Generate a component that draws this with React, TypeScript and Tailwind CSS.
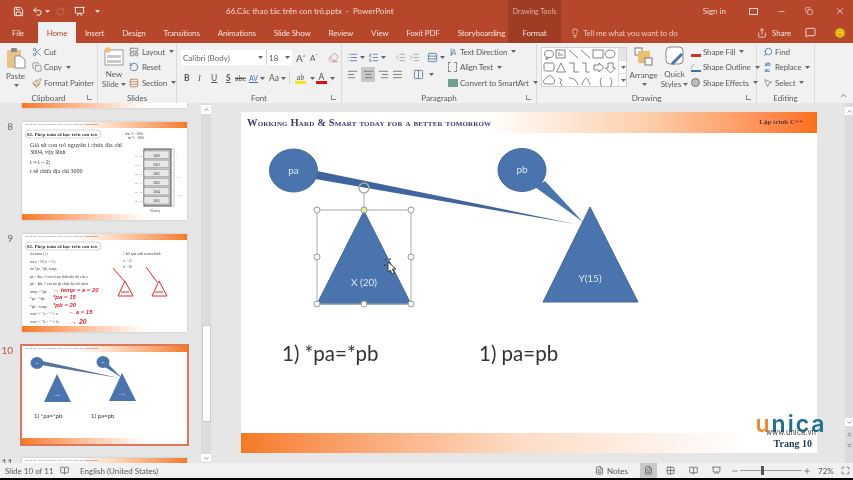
import React from "react";
import {
  Save, Undo2, Scissors, Copy, Paintbrush, LayoutTemplate, RotateCcw, Rows3, RotateCw,
  List, ListOrdered, IndentDecrease, IndentIncrease, AlignLeft, AlignCenter, AlignRight, AlignJustify,
  Columns2, Search, MousePointer2, Lightbulb, Share, MessageSquare, Smile, X, Minus, ChevronUp, ChevronDown,
  Eraser, Plus, FileText, Grid2x2, BookOpen, Presentation, Maximize, ChevronsUp, ChevronsDown, Copy as CopyIcon,
} from "lucide-react";

const sans = "font-['Lato','Liberation_Sans',sans-serif]";

function Caret({ light }: { light?: boolean }) {
  return (
    <svg width="5" height="3" viewBox="0 0 5 3" className="shrink-0 ml-[2px]">
      <path d="M0 0h5L2.500 3z" fill={light ? "#f3d6ce" : "#666"} />
    </svg>
  );
}

function Group({ label, width, launcher, children }: { label: string; width: string; launcher?: boolean; children: React.ReactNode }) {
  return (
    <div className={`${width} shrink-0 h-full flex flex-col border-r border-[#dadada] relative`}>
      <div className="h-[48px] flex">{children}</div>
      <div className="h-[11px] flex items-center justify-center text-[8px] text-[#5a5a5a]">{label}</div>
      {launcher && <div className="absolute right-[5px] bottom-[3px] w-[5px] h-[5px] border-l border-b border-[#888]" />}
    </div>
  );
}

function SmallCmd({ icon, label, caret }: { icon: React.ReactNode; label: string; caret?: boolean }) {
  return (
    <div className="h-[15.5px] flex items-center gap-[2px] text-[8px] tracking-[-0.15px] text-[#5a5a5a] whitespace-nowrap">
      <span className="w-[11px] h-[11px] flex items-center justify-center shrink-0">{icon}</span>
      <span>{label}</span>
      {caret && <Caret />}
    </div>
  );
}

function Shapes() {
  const s = { fill: "none", stroke: "#666", strokeWidth: 0.8 };
  return (
    <svg viewBox="0 0 76 40" className="w-[76px] h-[40px] shrink-0">
      <ellipse cx="7" cy="6" rx="4.500" ry="3.500" {...s} /><path d="M5 9l-1 3 3-3" {...s} />
      <rect x="14" y="2" width="9" height="8" {...s} /><path d="M16 5h2M16 7h5" {...s} />
      <path d="M27 2l9 8M39 2l9 8" {...s} />
      <rect x="51" y="2" width="10" height="8" {...s} />
      <ellipse cx="68" cy="6" rx="5" ry="4" {...s} />
      <rect x="2" y="15" width="10" height="8" rx="1.500" {...s} />
      <path d="M19 15l-4.500 9h9zM27 15h5v9h5M40 15h4v9h4M52 17h5v-2l5 4.500-5 4.500v-2h-5zM66 15h5v5h2.500l-5 5-5-5H66z" {...s} />
      <path d="M3 36c-3-2-1-5 1-6 2-3 6-3 7 0 2 1 2 5 0 6zM17 30l3 2-2 2 2 4M27 30c5 0 8 3 9 7M40 37c3-10 6-8 8 0M60 30c-2 0-1 3-2 4 1 1 0 4 2 4M68 30c2 0 1 3 2 4-1 1 0 4-2 4" {...s} />
    </svg>
  );
}

function PasteIcon() {
  return (
    <svg width="20" height="22" viewBox="0 0 20 22">
      <rect x="1" y="3" width="14" height="18" rx="1" fill="#e8c48a" />
      <rect x="5" y="1" width="6" height="4" rx="1" fill="#8a8a8a" />
      <path d="M9 9h6l4 4v8H9z" fill="#fff" stroke="#777" strokeWidth=".8" />
    </svg>
  );
}

function NewSlideIcon() {
  return (
    <svg width="20" height="19" viewBox="0 0 20 19">
      <rect x="1" y="3" width="18" height="15" fill="#fff" stroke="#999" />
      <rect x="3" y="8" width="14" height="3" fill="#c9c9c9" />
      <rect x="3" y="13" width="14" height="3" fill="#c9c9c9" />
      <circle cx="4" cy="3" r="2.800" fill="#f3c26b" />
    </svg>
  );
}

function Ribbon() {
  return (
    <div className={`h-[60px] bg-[#f1f1f1] flex shrink-0 pt-[1px] ${sans}`}>
      <Group label="Clipboard" width="w-[98px]" launcher>
        <div className="w-[31px] flex flex-col items-center pt-[3px] text-[8px] text-[#5a5a5a] leading-[10px]">
          <PasteIcon />
          <span className="mt-[2px]">Paste</span>
          <span className="mt-[3px]"><Caret /></span>
        </div>
        <div className="flex flex-col">
          <SmallCmd icon={<Scissors size={10} className="text-[#5b7fa6]" />} label="Cut" />
          <SmallCmd icon={<Copy size={10} className="text-[#888]" />} label="Copy" caret />
          <SmallCmd icon={<Paintbrush size={10} className="text-[#a67c3a]" />} label="Format Painter" />
        </div>
      </Group>
      <Group label="Slides" width="w-[79px]">
        <div className="w-[31px] pl-[1px] flex flex-col items-center pt-[3px] text-[8px] text-[#5a5a5a] leading-[10px]">
          <NewSlideIcon />
          <span className="mt-[3px]">New</span>
          <span className="flex items-center">Slide<Caret /></span>
        </div>
        <div className="flex flex-col">
          <SmallCmd icon={<LayoutTemplate size={10} className="text-[#777]" />} label="Layout" caret />
          <SmallCmd icon={<RotateCcw size={10} className="text-[#3f73a8]" />} label="Reset" />
          <SmallCmd icon={<Rows3 size={10} className="text-[#b9824f]" />} label="Section" caret />
        </div>
      </Group>
      <Group label="Font" width="w-[165px]" launcher>
        <div className="flex flex-col pl-[4px] pt-[6px] text-[#5a5a5a]">
          <div className="flex items-center text-[8px]">
            <div className="w-[111px] h-[15px] bg-white flex items-center">
              <span className="w-[75px] pl-[2px] text-[#666] whitespace-nowrap">Calibri (Body)</span>
              <Caret />
              <span className="h-full w-[1px] bg-[#d0d0d0] ml-[3px]" />
              <span className="flex-1 pl-[2px] flex items-center">18<span className="ml-auto pr-[2px]"><Caret /></span></span>
            </div>
            <span className="text-[10px] leading-none ml-[4px] w-[14px]">A<sup className="text-[5px]">^</sup></span>
            <span className="text-[8px] leading-none w-[14px]">A<sup className="text-[5px]">ˇ</sup></span>
            <Eraser size={11} className="text-[#c98b9b] ml-[4px]" />
          </div>
          <div className="flex items-center mt-[7px] text-[8.5px] pl-[3px] h-[13px]">
            <span className="font-bold w-[14px]">B</span>
            <span className="italic w-[13px] font-['Liberation_Serif',serif]">I</span>
            <span className="underline w-[15px]">U</span>
            <span className="underline font-bold w-[9px]">S</span>
            <span className="line-through text-[7px] w-[14px]">abc</span>
            <span className="text-[7px] flex items-center text-[#4b6fa5] underline w-[20px]">AV<Caret /></span>
            <span className="flex items-center w-[20px]">Aa<Caret /></span>
            <span className="w-[1px] h-[11px] bg-[#d4d4d4] mr-[5px]" />
            <span className="flex flex-col items-center leading-[8px] text-[7px] w-[11px] italic">ab<span className="w-[11px] h-[3px] bg-[#f5e71b]" /></span>
            <span className="w-[10px] flex justify-center"><Caret /></span>
            <span className="flex flex-col items-center leading-[8px] text-[#444] w-[11px]">A<span className="w-[11px] h-[3px] bg-[#e01010]" /></span>
            <span className="w-[8px] flex justify-center"><Caret /></span>
          </div>
        </div>
      </Group>
      <Group label="Paragraph" width="w-[195px]" launcher>
        <div className="w-[105px] shrink-0 flex flex-col pl-[5px] pt-[6px] text-[#5f7ea6]">
          <div className="flex items-center h-[14px]">
            <List size={11} /><Caret /><span className="w-[3px]" /><ListOrdered size={11} /><Caret />
            <IndentDecrease size={11} className="ml-[9px] text-[#aaa]" /><IndentIncrease size={11} className="ml-[3px] text-[#aaa]" />
            <Rows3 size={11} className="ml-[7px]" /><Caret />
          </div>
          <div className="flex items-center gap-[3px] mt-[3px] text-[#777]">
            <AlignLeft size={11} />
            <span className="w-[14px] h-[15px] bg-[#c8c8c8] flex items-center justify-center"><AlignCenter size={11} /></span>
            <AlignRight size={11} /><AlignJustify size={11} />
            <Columns2 size={11} className="ml-[7px] text-[#5f7ea6]" /><Caret />
          </div>
        </div>
        <div className="flex flex-col">
          <SmallCmd icon={<span className="text-[7px] text-[#5f7ea6] tracking-[-1px]">||A</span>} label="Text Direction" caret />
          <SmallCmd icon={<span className="w-[9px] h-[10px] border border-dashed border-[#888]" />} label="Align Text" caret />
          <SmallCmd icon={<span className="w-[10px] h-[8px] bg-[#6fa08b]" />} label="Convert to SmartArt" caret />
        </div>
      </Group>
      <Group label="Drawing" width="w-[220px]" launcher>
        <div className="ml-[4px] mt-[3px] w-[86px] h-[40px] bg-white border border-[#d0d0d0] flex shrink-0">
          <Shapes />
          <div className="flex-1 border-l border-[#ddd] flex flex-col">
            <div className="flex-1 bg-[#e4e4e4]" />
            <div className="flex-1 border-y border-[#ddd] flex items-center justify-center"><Caret /></div>
            <div className="flex-1 flex items-center justify-center"><Caret /></div>
          </div>
        </div>
        <div className="w-[33px] flex flex-col items-center pt-[3px] text-[8px] text-[#5a5a5a] leading-[10px] shrink-0">
          <svg width="20" height="20" viewBox="0 0 20 20">
            <rect x="1" y="1" width="7" height="7" fill="#fff" stroke="#777" />
            <rect x="4" y="4" width="12" height="12" fill="#e8c070" />
            <rect x="11" y="11" width="7" height="7" fill="#fff" stroke="#777" />
          </svg>
          <span className="mt-[3px]">Arrange</span>
          <span className="mt-[3px]"><Caret /></span>
        </div>
        <div className="w-[29px] flex flex-col items-center pt-[2px] text-[8px] text-[#5a5a5a] leading-[10px] shrink-0">
          <svg width="20" height="20" viewBox="0 0 20 20">
            <rect x="1" y="1" width="17" height="17" rx="4" fill="#fff" stroke="#888" />
            <path d="M7 18L17 8" stroke="#4a74ad" strokeWidth="3" />
          </svg>
          <span className="mt-[3px]">Quick</span>
          <span className="flex items-center">Styles<Caret /></span>
        </div>
        <div className="flex flex-col ml-[1px]">
          <SmallCmd icon={<span className="w-[10px] h-[3px] mt-[7px] bg-[#c0392b]" />} label="Shape Fill" caret />
          <SmallCmd icon={<span className="w-[10px] h-[10px] border-b-2 border-[#3f73a8] text-[#3f73a8] text-[7px] leading-[8px]">∕</span>} label="Shape Outline" caret />
          <SmallCmd icon={<span className="w-[9px] h-[9px] rounded-full bg-[#bbb] border border-[#777]" />} label="Shape Effects" caret />
        </div>
      </Group>
      <Group label="Editing" width="w-[58px]">
        <div className="flex flex-col pl-[5px]">
          <SmallCmd icon={<Search size={10} className="text-[#3f73a8] -scale-x-100" />} label="Find" />
          <SmallCmd icon={<span className="text-[6px] leading-[6px] text-[#3f73a8] font-bold">ab<br />ac</span>} label="Replace" caret />
          <SmallCmd icon={<MousePointer2 size={10} className="text-[#888]" />} label="Select" caret />
        </div>
      </Group>
      <div className="flex-1 flex items-end justify-end pr-[5px] pb-[3px]">
        <ChevronUp size={9} className="text-[#666]" />
      </div>
    </div>
  );
}

function TitleBar() {
  return (
    <div className={`h-[22px] bg-[#b7472a] flex items-center shrink-0 text-[#f3d6ce] text-[8px] ${sans}`}>
      <div className="w-[113px] flex items-center pl-[13px] text-white shrink-0">
        <Save size={11} />
        <Undo2 size={11} className="ml-[8px]" /><Caret light />
        <RotateCw size={9} className="ml-[6px] text-[#c9765f]" />
        <Presentation size={11} className="ml-[9px]" />
        <span className="ml-[8px]"><Caret light /></span>
      </div>
      <div className="w-[157px] ml-[113px] text-center whitespace-pre shrink-0">66.Các thao tác trên con trỏ.pptx  -  PowerPoint</div>
      <div className="w-[53px] ml-[125px] h-full bg-[#9f3d24] flex items-center justify-center text-[7px] text-[#dfb3a6] shrink-0">Drawing Tools</div>
      <div className="ml-auto flex items-center h-full">
        <span className="mr-[23px]">Sign in</span>
        <span className="w-[9px] h-[7px] border border-[#f3d6ce] mr-[19px]" />
        <Minus size={9} className="mr-[19px]" />
        <CopyIcon size={8} className="mr-[22px]" />
        <X size={10} className="mr-[8px]" />
      </div>
    </div>
  );
}

function TabBar() {
  return (
    <div className={`h-[21px] bg-[#b7472a] flex items-center shrink-0 text-[#f6e0da] text-[8px] tracking-[-0.15px] ${sans}`}>
      <div className="w-[38px] pl-[12px]">File</div>
      <div className="w-[38px] h-full bg-[#f1f1f1] text-[#b7472a] flex items-center justify-center">Home</div>
      <div className="flex items-center h-full pl-[9px] gap-[18px] whitespace-nowrap w-[432px] shrink-0">
        <span>Insert</span><span>Design</span><span>Transitions</span><span>Animations</span><span>Slide Show</span><span>Review</span><span>View</span><span>Foxit PDF</span><span>Storyboarding</span>
      </div>
      <div className="w-[53px] h-full bg-[#9f3d24] flex items-center justify-center shrink-0">Format</div>
      <div className="flex items-center ml-[9px] gap-[3px] whitespace-nowrap text-[#eec9be]">
        <Lightbulb size={10} /> Tell me what you want to do
      </div>
      <div className="ml-auto flex items-center pr-[7px]">
        <Share size={10} />
        <span className="ml-[5px] mr-[14px]">Share</span>
        <MessageSquare size={11} className="mr-[18px]" />
        <Smile size={12} fill="#f5c518" className="text-[#a8741a]" />
      </div>
    </div>
  );
}

function ThumbFrame({ children }: { children?: React.ReactNode }) {
  return (
    <div className="w-[165px] h-[98px] bg-white shadow-[0_0_2px_#bbb] flex flex-col">
      <div className="h-[6px] bg-gradient-to-r from-white from-[30%] via-[#fde2cd] to-[#f47a20] shrink-0 pl-[3px] text-[2.500px] text-[#445] leading-[6px] whitespace-nowrap font-['Liberation_Serif',serif]">
        WORKING HARD &amp; SMART TODAY FOR A BETTER TOMORROW
      </div>
      <div className="flex-1 min-h-0 relative">{children}</div>
      <div className="h-[6px] bg-gradient-to-r from-[#f47a20] to-white to-[75%] shrink-0" />
    </div>
  );
}

function Thumb({ n, selected, children }: { n: number; selected?: boolean; children?: React.ReactNode }) {
  return (
    <div className="flex items-start h-[98px]">
      <div className={`w-[13px] text-right text-[10px] leading-[8px] ${selected ? "text-[#c0533a]" : "text-[#666]"} ${sans}`}>{n}</div>
      <div className={`ml-[9px] ${selected ? "outline-[2px] outline-solid outline-[#e0765c]" : ""}`}>
        <ThumbFrame>{children}</ThumbFrame>
      </div>
    </div>
  );
}

function Thumb8() {
  const rows = ["3000", "3001", "3002", "3003", "3004", "3005"];
  return (
    <svg viewBox="0 0 165 86" className="w-full h-full font-['Liberation_Serif',serif]">
      <rect x="3" y="2" width="76" height="8" rx="4" fill="#fff" stroke="#aaa" strokeWidth=".5" />
      <text x="5" y="8" fontSize="5" fontWeight="700" fill="#333">02. Phép toán số học trên con trỏ</text>
      <text x="8" y="19" fontSize="6" fill="#333" textLength="92">Giả sử con trỏ nguyên i chứa địa chỉ</text>
      <text x="8" y="26" fontSize="6" fill="#333">3004, vậy lệnh</text>
      <text x="8" y="36" fontSize="6" fill="#333">i = i – 2;</text>
      <text x="8" y="45" fontSize="6" fill="#333">i sẽ chứa địa chỉ 3000</text>
      <text x="103" y="7" fontSize="3" fill="#444">char *i = 3000;</text>
      <text x="106" y="11" fontSize="3" fill="#444">int *i = 3000;</text>
      <rect x="122" y="21" width="27" height="57" fill="#c4c4c4" stroke="#555" />
      <path d="M149 21h3v57h-3" fill="none" stroke="#888" strokeWidth=".5" />
      {rows.map((r, i) => (
        <g key={r}>
          <rect x="122" y={23 + i * 9.100} width="25" height="7.500" fill="#e8e8e8" stroke="#777" strokeWidth=".4" />
          <text x="131" y={28.500 + i * 9.100} fontSize="3.500" fill="#444">{r}</text>
          <text x="113" y={28.500 + i * 9.100} fontSize="2.800" fill="#666">ch + {i}</text>
        </g>
      ))}
      <text x="154" y="29" fontSize="2.800" fill="#666">i</text>
      <text x="154" y="50" fontSize="2.800" fill="#666">i + 1</text>
      <text x="154" y="68" fontSize="2.800" fill="#666">i + 2</text>
      <text x="128" y="84" fontSize="3" fill="#666">Memory</text>
    </svg>
  );
}

function Thumb9() {
  const lines = ["int main ( ) {", "int a = 20, b = 15;", "int *pa, *pb, temp;", "pa = &a; // con trỏ pa chứa địa chỉ của a", "pb = &b; // con trỏ pb chứa địa chỉ của b", "temp = *pa;", "*pa = *pb;", "*pb = temp;", "cout << \"a = \" << a", "cout << \"b = \" << b;"];
  return (
    <svg viewBox="0 0 165 86" className="w-full h-full font-['Liberation_Serif',serif]">
      <rect x="3" y="2" width="76" height="8" rx="4" fill="#fff" stroke="#aaa" strokeWidth=".5" />
      <text x="5" y="8" fontSize="5" fontWeight="700" fill="#333">02. Phép toán số học trên con trỏ</text>
      {lines.map((l, i) => <text key={i} x="8" y={15 + i * 7.550} fontSize="3.600" fill="#444">{l}</text>)}
      <text x="101" y="15" fontSize="3.500" fill="#444">// kết quả xuất ra màn hình</text>
      <text x="101" y="22" fontSize="3.500" fill="#444">a = 15</text>
      <text x="101" y="28" fontSize="3.500" fill="#444">b = 20</text>
      <g fill="none" stroke="#e3262e" strokeWidth="1">
        <path d="M103 41l-7 15h15zM137 41l-7 15h15zM91 28l12 14M124 27l11 15" />
        <path d="M99 52h8M133 52h8" />
      </g>
      <g fill="#e3262e" fontSize="6" fontWeight="700" fontFamily="Liberation Sans" fontStyle="italic">
        <text x="31" y="52">→ temp = a = 20</text>
        <text x="31" y="59">*pa = 15</text>
        <text x="31" y="67">*pb = 20</text>
        <text x="46" y="74">→ a = 15</text>
        <text x="48" y="84" fontSize="7">→ 20</text>
      </g>
    </svg>
  );
}

function Thumb10() {
  return (
    <svg viewBox="0 0 165 86" className="w-full h-full font-['Lato','Liberation_Sans',sans-serif]">
      <path d="M20 9l-1 4 78 13z" fill="#5a7299" />
      <path d="M86 12l-3 3 17 11z" fill="#4a74ad" />
      <ellipse cx="15" cy="11" rx="6.500" ry="6" fill="#4a74ad" />
      <ellipse cx="81" cy="10" rx="6.500" ry="6" fill="#4a74ad" />
      <path d="M35 22L22 50h27z" fill="#4a74ad" />
      <path d="M100 21L87 49h27z" fill="#4a74ad" />
      <g fill="#dce6f2" fontSize="2.500" textAnchor="middle">
        <text x="15" y="12">pa</text><text x="81" y="11">pb</text><text x="35" y="44">X (20)</text><text x="100" y="43">Y(15)</text>
      </g>
      <text x="12" y="66" fontSize="6" fill="#333">1) *pa=*pb</text>
      <text x="69" y="66" fontSize="6" fill="#333">1) pa=pb</text>
    </svg>
  );
}

function ThumbPane() {
  return (
    <div className="w-[212px] h-full shrink-0 flex overflow-hidden">
      <div className="w-[201px] shrink-0 flex flex-col gap-[14px] -mt-[93px]">
        <div className="ml-[22px] w-[165px] h-[98px] bg-white flex flex-col justify-end shrink-0 shadow-[0_0_2px_#bbb]"><div className="h-[6px] bg-gradient-to-r from-[#f47a20] to-white to-[75%]" /></div>
        <Thumb n={8}><Thumb8 /></Thumb>
        <Thumb n={9}><Thumb9 /></Thumb>
        <Thumb n={10} selected><Thumb10 /></Thumb>
        <Thumb n={11} />
      </div>
      <div className="w-[10px] h-full bg-[#dcdcdc] flex flex-col items-center pt-[2px]">
        <div className="w-[10px] h-[9px] bg-white flex items-center justify-center"><ChevronUp size={7} className="text-[#444]" /></div>
        <div className="mt-[211px] w-[9px] h-[97px] bg-white border border-[#ccc]" />
        <div className="mt-auto mb-[1px] w-[10px] h-[8px] bg-white flex items-center justify-center"><ChevronDown size={7} className="text-[#444]" /></div>
      </div>
    </div>
  );
}

function MainSlide() {
  const blue = "#4a74ad";
  const handles = [[317, 210], [364, 210], [411, 210], [317, 257], [411, 257], [317, 304], [364, 304], [411, 304]];
  return (
    <div className="w-[576px] h-[341px] bg-white flex flex-col shrink-0 relative">
      <div className="h-[21px] bg-gradient-to-r from-white from-[42%] via-[#fcd0ac] via-[70%] to-[#fb6f16] flex items-center justify-between pl-[6px] pr-[14px] shrink-0 font-['Liberation_Serif',serif] font-bold text-[#3a3a70]">
        <span className="text-[10.5px] tracking-[0.15px] [font-variant:small-caps] whitespace-nowrap">Working Hard &amp; Smart today for a better tomorrow</span>
        <span className="text-[7px] text-[#5a3a3a]">Lập trình C++</span>
      </div>
      <div className="flex-1 relative">
        <svg viewBox="241 133 576 300" className="absolute inset-0 w-full h-full font-['Lato','Liberation_Sans',sans-serif]">
          <path d="M317 171L315 179 575 224z" fill="#3f659c" />
          <ellipse cx="293.500" cy="170.500" rx="24" ry="21.500" fill={blue} stroke="#44699c" />
          <path d="M545 181L535 187 583 222z" fill={blue} />
          <ellipse cx="522" cy="170" rx="24" ry="21.500" fill={blue} stroke="#44699c" />
          <path d="M590 207L543 302H638z" fill={blue} stroke="#44699c" />
          <path d="M364 211L317 304H411z" fill={blue} stroke="#44699c" />
          <path d="M364 193V210" stroke="#aaa" />
          <circle cx="364" cy="188" r="5" fill="none" stroke="#aaa" strokeWidth="1.500" />
          <rect x="317" y="210" width="94" height="94" fill="none" stroke="#aaa" />
          {handles.map(([x, y], i) => (
            <circle key={i} cx={x} cy={y} r="3" fill={i === 1 ? "#e8eb9c" : "#fff"} stroke="#999" />
          ))}
          <path d="M388 262l0 10 2.500-2 1.500 4 2-1-1.500-4h3.500z" fill="#fff" stroke="#222" strokeWidth=".8" />
          <path d="M390 260v-2M386 265h-2M386 260l-1-1" stroke="#222" />
          <g fill="#dce6f2" fontSize="10" textAnchor="middle">
            <text x="293.500" y="174">pa</text>
            <text x="522" y="173">pb</text>
            <text x="364" y="286">X (20)</text>
            <text x="590" y="282">Y(15)</text>
          </g>
          <g fill="#333" fontSize="20.500">
            <text x="282" y="361">1) *pa=*pb</text>
            <text x="479" y="361">1) pa=pb</text>
          </g>
        </svg>
      </div>
      <div className="h-[20px] bg-gradient-to-r from-[#f47a20] via-[#fcdcc4] via-[48%] to-white to-[88%] shrink-0 flex justify-end items-center pr-[5px]">
        <span className="font-['Liberation_Serif',serif] font-bold text-[10px] text-[#1f3a5f]">Trang 10</span>
      </div>
      <div className="absolute right-[-8px] top-[301px] w-[68px] flex flex-col items-center font-['Inter','Liberation_Sans',sans-serif]">
        <div className="text-[23px] leading-[22px] font-semibold tracking-[2px] text-[#1f6f8f] whitespace-nowrap"><span className="text-[#ef8a2c]">u</span>nica</div>
        <div className="text-[7.5px] leading-[7px] text-[#444] -mt-[6px]">www.unica.vn</div>
      </div>
    </div>
  );
}

function VScroll() {
  return (
    <div className="w-[8px] h-full ml-auto bg-[#dcdcdc] flex flex-col text-[#555] shrink-0 pt-[4px] pb-[12px]">
      <div className="h-[8px] bg-white flex items-center justify-center"><ChevronUp size={7} /></div>
      <div className="mt-auto h-[8px] bg-white flex items-center justify-center"><ChevronDown size={7} /></div>
      <div className="mt-[3px] h-[11px] flex items-center justify-center"><ChevronsUp size={7} /></div>
      <div className="h-[11px] flex items-center justify-center"><ChevronsDown size={7} /></div>
    </div>
  );
}

function StatusBar() {
  return (
    <div className={`h-[15px] bg-[#f1f1f1] flex items-center text-[8px] text-[#5a5a5a] shrink-0 ${sans}`}>
      <span className="pl-[5px] w-[60px] whitespace-nowrap">Slide 10 of 11</span>
      <BookOpen size={9} />
      <span className="ml-[11px]">English (United States)</span>
      <div className="ml-auto flex items-center h-full">
        <span className="flex items-center gap-[3px] mr-[12px]"><FileText size={9} />Notes</span>
        <span className="w-[17px] h-full bg-[#c9c9c9] flex items-center justify-center"><FileText size={9} /></span>
        <Grid2x2 size={9} className="ml-[9px]" />
        <BookOpen size={9} className="ml-[14px]" />
        <Presentation size={9} className="ml-[14px]" />
        <Minus size={8} className="ml-[10px]" />
        <div className="w-[62px] h-[1px] bg-[#999] mx-[1px] relative">
          <div className="absolute left-[21px] -top-[4px] w-[3px] h-[9px] bg-[#555]" />
        </div>
        <Plus size={8} />
        <span className="ml-[7px] w-[17px]">72%</span>
        <Maximize size={9} className="ml-[6px] mr-[3px]" />
      </div>
    </div>
  );
}

export default function App() {
  return (
    <div className="w-[853px] h-[480px] overflow-hidden flex flex-col bg-[#e6e6e6] blur-[0.3px] font-['Lato','Liberation_Sans',sans-serif]">
      <TitleBar />
      <TabBar />
      <Ribbon />
      <div className="flex-1 min-h-0 flex">
        <ThumbPane />
        <div className="flex-1 flex min-w-0">
          <div className="pl-[29px] pt-[9px]"><MainSlide /></div>
          <VScroll />
        </div>
      </div>
      <StatusBar />
      <div className="h-[2px] bg-black shrink-0" />
    </div>
  );
}
